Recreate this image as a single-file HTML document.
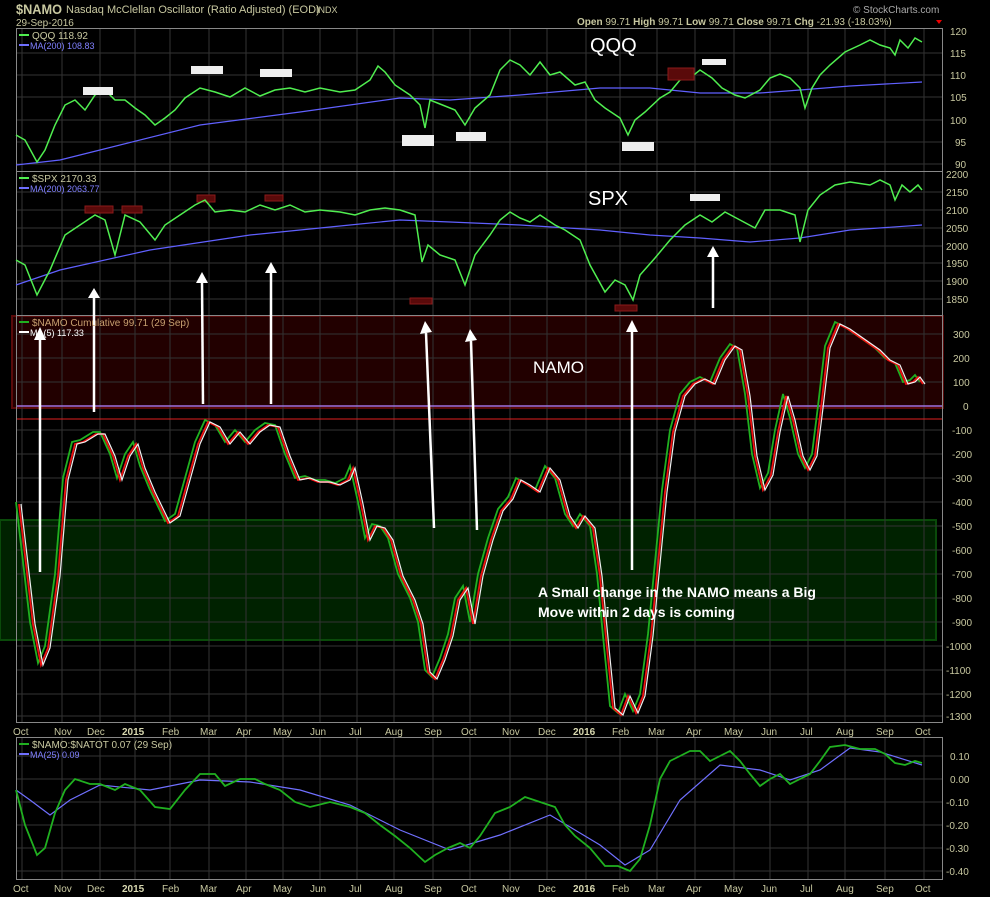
<!DOCTYPE html>
<html><head><meta charset="utf-8"><style>
html,body{margin:0;padding:0;background:#000;width:990px;height:897px;overflow:hidden}
svg{display:block;font-family:"Liberation Sans",sans-serif}
</style></head><body>
<svg width="990" height="897" viewBox="0 0 990 897" xmlns="http://www.w3.org/2000/svg">
<rect width="990" height="897" fill="#000"/>
<!-- header -->
<text x="16" y="14" font-size="14" font-weight="bold" fill="#c8c8a0" textLength="46" lengthAdjust="spacingAndGlyphs">$NAMO</text>
<text x="66" y="13" font-size="11" fill="#c8c8a0">Nasdaq McClellan Oscillator (Ratio Adjusted) (EOD)</text>
<text x="316" y="13" font-size="9" fill="#c8c8a0">INDX</text>
<text x="16" y="26" font-size="10" fill="#c8c8a0">29-Sep-2016</text>
<text x="853" y="13" font-size="10" fill="#aaa">© StockCharts.com</text>
<text x="577" y="25" font-size="10" fill="#c8c8a0"><tspan font-weight="bold">Open</tspan> 99.71  <tspan font-weight="bold">High</tspan> 99.71  <tspan font-weight="bold">Low</tspan> 99.71  <tspan font-weight="bold">Close</tspan> 99.71  <tspan font-weight="bold">Chg</tspan> -21.93 (-18.03%)</text>
<polygon points="936,20 942,20 939,24" fill="#e00"/>

<!-- background zones -->
<rect x="12" y="316" width="931" height="92" fill="#220000" stroke="#5a0a0a" stroke-width="2"/>
<rect x="0" y="520" width="936" height="120" fill="#002200" stroke="#0a4a0a" stroke-width="2"/>

<!-- grid -->
<g stroke="#333" stroke-width="1">
<g id="vg">
<line x1="22" x2="22" y1="28" y2="723"/><line x1="62" x2="62" y1="28" y2="723"/><line x1="100" x2="100" y1="28" y2="723"/><line x1="135" x2="135" y1="28" y2="723"/><line x1="170" x2="170" y1="28" y2="723"/><line x1="209" x2="209" y1="28" y2="723"/><line x1="246" x2="246" y1="28" y2="723"/><line x1="283" x2="283" y1="28" y2="723"/><line x1="320" x2="320" y1="28" y2="723"/><line x1="357" x2="357" y1="28" y2="723"/><line x1="394" x2="394" y1="28" y2="723"/><line x1="433" x2="433" y1="28" y2="723"/><line x1="470" x2="470" y1="28" y2="723"/><line x1="510" x2="510" y1="28" y2="723"/><line x1="547" x2="547" y1="28" y2="723"/><line x1="586" x2="586" y1="28" y2="723"/><line x1="620" x2="620" y1="28" y2="723"/><line x1="657" x2="657" y1="28" y2="723"/><line x1="695" x2="695" y1="28" y2="723"/><line x1="734" x2="734" y1="28" y2="723"/><line x1="770" x2="770" y1="28" y2="723"/><line x1="808" x2="808" y1="28" y2="723"/><line x1="845" x2="845" y1="28" y2="723"/><line x1="885" x2="885" y1="28" y2="723"/><line x1="924" x2="924" y1="28" y2="723"/>
</g>
<line x1="16" x2="943" y1="53" y2="53"/><line x1="16" x2="943" y1="75" y2="75"/><line x1="16" x2="943" y1="97" y2="97"/><line x1="16" x2="943" y1="120" y2="120"/><line x1="16" x2="943" y1="142" y2="142"/><line x1="16" x2="943" y1="164" y2="164"/>
<line x1="16" x2="943" y1="192" y2="192"/><line x1="16" x2="943" y1="210" y2="210"/><line x1="16" x2="943" y1="228" y2="228"/><line x1="16" x2="943" y1="246" y2="246"/><line x1="16" x2="943" y1="263" y2="263"/><line x1="16" x2="943" y1="281" y2="281"/><line x1="16" x2="943" y1="299" y2="299"/>
<line x1="16" x2="943" y1="334" y2="334"/><line x1="16" x2="943" y1="358" y2="358"/><line x1="16" x2="943" y1="382" y2="382"/><line x1="16" x2="943" y1="430" y2="430"/><line x1="16" x2="943" y1="454" y2="454"/><line x1="16" x2="943" y1="478" y2="478"/><line x1="16" x2="943" y1="502" y2="502"/><line x1="16" x2="943" y1="526" y2="526"/><line x1="16" x2="943" y1="550" y2="550"/><line x1="16" x2="943" y1="574" y2="574"/><line x1="16" x2="943" y1="598" y2="598"/><line x1="16" x2="943" y1="622" y2="622"/><line x1="16" x2="943" y1="646" y2="646"/><line x1="16" x2="943" y1="670" y2="670"/><line x1="16" x2="943" y1="694" y2="694"/><line x1="16" x2="943" y1="716" y2="716"/>
</g>
<g stroke="#333">
<line x1="22" x2="22" y1="738" y2="880"/><line x1="62" x2="62" y1="738" y2="880"/><line x1="100" x2="100" y1="738" y2="880"/><line x1="135" x2="135" y1="738" y2="880"/><line x1="170" x2="170" y1="738" y2="880"/><line x1="209" x2="209" y1="738" y2="880"/><line x1="246" x2="246" y1="738" y2="880"/><line x1="283" x2="283" y1="738" y2="880"/><line x1="320" x2="320" y1="738" y2="880"/><line x1="357" x2="357" y1="738" y2="880"/><line x1="394" x2="394" y1="738" y2="880"/><line x1="433" x2="433" y1="738" y2="880"/><line x1="470" x2="470" y1="738" y2="880"/><line x1="510" x2="510" y1="738" y2="880"/><line x1="547" x2="547" y1="738" y2="880"/><line x1="586" x2="586" y1="738" y2="880"/><line x1="620" x2="620" y1="738" y2="880"/><line x1="657" x2="657" y1="738" y2="880"/><line x1="695" x2="695" y1="738" y2="880"/><line x1="734" x2="734" y1="738" y2="880"/><line x1="770" x2="770" y1="738" y2="880"/><line x1="808" x2="808" y1="738" y2="880"/><line x1="845" x2="845" y1="738" y2="880"/><line x1="885" x2="885" y1="738" y2="880"/><line x1="924" x2="924" y1="738" y2="880"/>
<line x1="16" x2="943" y1="756" y2="756"/><line x1="16" x2="943" y1="779" y2="779"/><line x1="16" x2="943" y1="802" y2="802"/><line x1="16" x2="943" y1="825" y2="825"/><line x1="16" x2="943" y1="848" y2="848"/><line x1="16" x2="943" y1="871" y2="871"/>
</g>

<line x1="16" x2="943" y1="406" y2="406" stroke="#a070e0" stroke-width="1.5"/>
<line x1="16" x2="943" y1="419" y2="419" stroke="#e02020" stroke-width="1"/>

<g fill="none" stroke="#888" stroke-width="1">
<rect x="16.5" y="28.5" width="926" height="694"/>
<line x1="16" x2="943" y1="171.5" y2="171.5"/>
<line x1="16" x2="943" y1="315.5" y2="315.5"/>
<rect x="16.5" y="737.5" width="926" height="142"/>
</g>

<!-- QQQ -->
<polyline fill="none" stroke="#6060ff" stroke-width="1.2" points="16,165 60,160 100,150 200,125 300,112 400,98 450,100 520,95 600,88 650,88 700,93 760,93 800,90 850,86 922,82"/>
<polyline fill="none" stroke="#50ee50" stroke-width="1.5" points="16,135 25,140 37,162 45,150 55,125 65,105 75,100 85,110 95,95 105,90 115,100 125,100 135,108 145,115 155,125 165,118 175,110 185,98 200,88 215,92 230,97 245,88 260,96 275,90 290,88 305,92 320,88 340,92 355,90 370,80 378,66 385,72 395,85 410,95 420,105 425,128 430,100 440,104 455,110 465,125 475,108 490,95 500,70 510,60 520,65 530,75 540,62 550,75 560,72 575,85 585,82 595,100 605,108 620,118 628,135 635,120 645,112 660,98 670,92 680,80 690,78 700,70 712,78 722,88 735,95 745,98 760,90 770,78 780,74 790,78 800,88 805,108 812,88 820,75 830,65 845,52 860,45 870,40 880,45 890,48 895,55 900,40 908,48 915,38 922,42"/>
<g fill="#eee">
<rect x="83" y="87" width="30" height="8"/><rect x="191" y="66" width="32" height="8"/><rect x="260" y="69" width="32" height="8"/><rect x="402" y="135" width="32" height="11"/><rect x="456" y="132" width="30" height="9"/><rect x="622" y="142" width="32" height="9"/><rect x="702" y="59" width="24" height="6"/><rect x="690" y="194" width="30" height="7"/>
</g>
<g fill="#5a0a0a" stroke="#8a1a1a">
<rect x="668" y="68" width="26" height="12"/><rect x="85" y="206" width="28" height="7"/><rect x="122" y="206" width="20" height="7"/><rect x="197" y="195" width="18" height="7"/><rect x="265" y="195" width="18" height="6"/><rect x="410" y="298" width="22" height="6"/><rect x="615" y="305" width="22" height="6"/>
</g>
<text x="590" y="52" font-size="20" fill="#fff">QQQ</text>

<!-- SPX -->
<polyline fill="none" stroke="#6060ff" stroke-width="1.2" points="16,285 60,270 150,250 250,235 350,225 400,220 450,222 520,225 600,230 650,235 700,238 750,242 800,238 850,230 922,225"/>
<polyline fill="none" stroke="#50ee50" stroke-width="1.5" points="16,260 25,265 37,295 50,270 65,235 80,225 95,215 105,220 115,255 125,215 140,222 155,240 165,225 180,215 195,205 205,200 215,212 230,210 245,212 260,205 275,210 290,205 305,212 320,210 340,212 355,215 370,210 385,208 400,210 415,215 422,262 428,245 440,255 455,260 465,285 475,255 490,235 500,220 510,212 520,218 530,222 540,215 555,225 565,230 580,240 590,265 605,292 615,280 625,285 633,300 640,275 655,258 670,240 685,225 700,215 712,222 725,212 740,220 755,228 765,210 780,210 795,215 800,242 808,210 820,195 835,185 850,182 870,185 880,180 890,185 895,200 902,185 910,192 918,185 922,190"/>
<text x="588" y="205" font-size="20" fill="#fff">SPX</text>

<!-- NAMO -->
<defs><polyline id="nm" fill="none" points="16,502 30,622 38,663 45,646 55,574 63,478 72,442 80,440 93,432 100,432 110,454 117,478 125,454 133,442 140,466 150,490 165,521 175,514 185,478 195,442 205,420 215,425 225,442 235,430 245,442 255,430 265,423 275,425 285,454 295,478 305,476 315,480 325,480 335,483 345,478 350,466 358,502 365,538 372,524 380,526 388,538 398,574 410,598 418,622 425,670 432,677 440,658 448,634 455,598 463,586 470,622 478,574 488,538 498,509 508,497 516,478 525,483 535,490 545,466 555,478 565,514 573,526 580,514 590,526 597,574 604,646 610,706 618,713 625,694 633,711 640,694 648,634 655,562 662,490 670,430 680,394 690,382 700,377 710,382 720,358 730,344 737,348 745,394 752,454 760,488 768,473 775,430 783,394 790,418 798,454 805,468 812,454 818,406 825,346 835,322 845,327 855,334 865,341 875,348 885,358 895,363 903,382 910,380 915,375 920,382"/></defs>
<use href="#nm" stroke="#20b020" stroke-width="1.8"/>
<use href="#nm" stroke="#ee1010" stroke-width="1.8" transform="translate(3,2)"/>
<use href="#nm" stroke="#f0f0f0" stroke-width="1.2" transform="translate(5,2)"/>
<text x="533" y="373" font-size="17" fill="#fff">NAMO</text>
<text x="538" y="597" font-size="14" font-weight="bold" fill="#fff">A Small change in the NAMO means a Big</text>
<text x="538" y="617" font-size="14" font-weight="bold" fill="#fff">Move within 2 days is coming</text>

<g stroke="#fff" stroke-width="2.5">
<line x1="40" y1="572" x2="40" y2="340"/><line x1="94" y1="412" x2="94" y2="298"/><line x1="203" y1="404" x2="202" y2="283"/><line x1="271" y1="404" x2="271" y2="273"/><line x1="434" y1="528" x2="426" y2="333"/><line x1="477" y1="530" x2="471" y2="341"/><line x1="632" y1="570" x2="632" y2="330"/><line x1="713" y1="308" x2="713" y2="256"/>
</g>
<g fill="#fff">
<polygon points="34,340 46,340 40,327"/><polygon points="88,298 100,298 94,288"/><polygon points="196,283 208,283 202,272"/><polygon points="265,273 277,273 271,262"/><polygon points="420,334 432,332 425,321"/><polygon points="465,342 477,340 470,329"/><polygon points="626,332 638,332 632,320"/><polygon points="707,257 719,257 713,246"/>
</g>

<g font-size="10">
<rect x="19" y="34" width="10" height="2" fill="#50ee50"/><text x="32" y="39" fill="#c8c8a0">QQQ 118.92</text>
<rect x="19" y="44" width="10" height="2" fill="#7070ff"/><text x="30" y="49" fill="#8080ff" font-size="9">MA(200) 108.83</text>
<rect x="19" y="177" width="10" height="2" fill="#50ee50"/><text x="32" y="182" fill="#c8c8a0">$SPX 2170.33</text>
<rect x="19" y="187" width="10" height="2" fill="#7070ff"/><text x="30" y="192" fill="#8080ff" font-size="9">MA(200) 2063.77</text>
<rect x="19" y="321" width="10" height="2" fill="#20b020"/><text x="32" y="326" fill="#c8a070">$NAMO Cumulative 99.71 (29 Sep)</text>
<rect x="19" y="331" width="10" height="2" fill="#fff"/><text x="30" y="336" fill="#fff" font-size="9">MA(5) 117.33</text>
<rect x="19" y="743" width="10" height="2" fill="#20b020"/><text x="32" y="748" fill="#c8c8a0">$NAMO:$NATOT 0.07 (29 Sep)</text>
<rect x="19" y="753" width="10" height="2" fill="#7070ff"/><text x="30" y="758" fill="#8080ff" font-size="9">MA(25) 0.09</text>
</g>

<polyline fill="none" stroke="#7070ff" stroke-width="1.2" points="16,790 30,800 50,815 70,800 100,785 150,790 200,780 250,782 300,790 350,805 400,830 450,850 500,835 550,815 600,845 625,865 650,850 680,800 720,765 760,770 790,780 820,770 850,748 880,752 922,765"/>
<polyline fill="none" stroke="#20b020" stroke-width="1.8" points="16,790 25,825 37,855 45,848 55,813 65,790 75,779 90,784 100,784 115,790 125,784 140,790 155,807 170,809 185,790 200,774 215,774 225,786 240,779 255,779 265,784 280,790 295,802 310,807 330,802 350,807 365,813 380,825 395,836 410,848 425,862 435,855 448,848 460,843 470,848 480,836 495,813 510,807 525,797 540,802 555,807 565,825 575,836 590,848 605,866 618,866 630,871 640,859 650,825 660,779 670,761 680,756 690,751 700,751 710,761 720,756 730,751 740,761 750,774 760,786 770,779 780,774 790,784 800,779 810,774 820,761 830,747 845,745 860,749 875,749 885,754 895,763 905,765 915,761 922,763"/>

<g font-size="10" fill="#c8c8a0">
<text x="950" y="35">120</text><text x="950" y="57">115</text><text x="950" y="79">110</text><text x="950" y="101">105</text><text x="950" y="124">100</text><text x="955" y="146">95</text><text x="955" y="168">90</text>
<text x="946" y="178">2200</text><text x="946" y="196">2150</text><text x="946" y="214">2100</text><text x="946" y="232">2050</text><text x="946" y="250">2000</text><text x="946" y="267">1950</text><text x="946" y="285">1900</text><text x="946" y="303">1850</text>
<text x="953" y="338">300</text><text x="953" y="362">200</text><text x="953" y="386">100</text><text x="963" y="410">0</text>
<text x="952" y="434">-100</text><text x="952" y="458">-200</text><text x="952" y="482">-300</text><text x="952" y="506">-400</text><text x="952" y="530">-500</text><text x="952" y="554">-600</text><text x="952" y="578">-700</text><text x="952" y="602">-800</text><text x="952" y="626">-900</text><text x="946" y="650">-1000</text><text x="946" y="674">-1100</text><text x="946" y="698">-1200</text><text x="946" y="720">-1300</text>
<text x="950" y="760">0.10</text><text x="950" y="783">0.00</text><text x="946" y="806">-0.10</text><text x="946" y="829">-0.20</text><text x="946" y="852">-0.30</text><text x="946" y="875">-0.40</text>
</g>

<g font-size="10" fill="#c8c8a0" id="xl">
<text x="13" y="735">Oct</text><text x="54" y="735">Nov</text><text x="87" y="735">Dec</text><text x="122" y="735" font-weight="bold" fill="#d8d8b0">2015</text><text x="162" y="735">Feb</text><text x="200" y="735">Mar</text><text x="236" y="735">Apr</text><text x="273" y="735">May</text><text x="310" y="735">Jun</text><text x="349" y="735">Jul</text><text x="385" y="735">Aug</text><text x="424" y="735">Sep</text><text x="461" y="735">Oct</text><text x="502" y="735">Nov</text><text x="538" y="735">Dec</text><text x="573" y="735" font-weight="bold" fill="#d8d8b0">2016</text><text x="612" y="735">Feb</text><text x="648" y="735">Mar</text><text x="686" y="735">Apr</text><text x="724" y="735">May</text><text x="761" y="735">Jun</text><text x="800" y="735">Jul</text><text x="836" y="735">Aug</text><text x="876" y="735">Sep</text><text x="915" y="735">Oct</text>
</g>
<use href="#xl" transform="translate(0,157)"/>
</svg>
</body></html>
